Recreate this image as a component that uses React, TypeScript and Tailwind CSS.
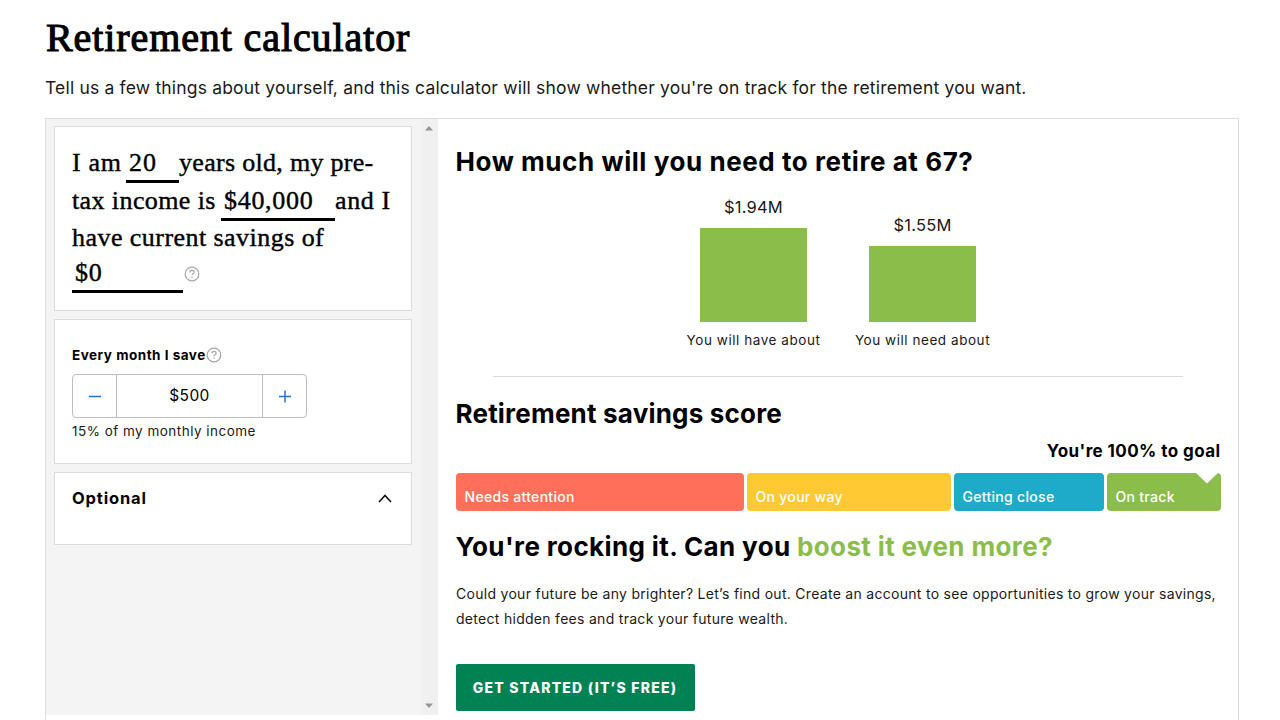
import { useState } from 'react';

const bars = [
  { label: 'You will have about', amount: '$1.94M', height: 94 },
  { label: 'You will need about', amount: '$1.55M', height: 76 },
];

function HelpIcon({ className }: { className?: string }) {
  return (
    <svg className={className} width="16" height="16" viewBox="0 0 16 16" fill="none" stroke="#a6a6a6">
      <circle cx="8" cy="8" r="6.8" strokeWidth="1.2" />
      <path d="M5.9 6.4c0-1.3.9-2.1 2.1-2.1s2.1.8 2.1 1.9c0 1.5-2.1 1.5-2.1 3.1" strokeWidth="1.2" />
      <path d="M8 10.5v1.3" strokeWidth="1.3" />
    </svg>
  );
}

export default function App() {
  const [monthly, setMonthly] = useState(500);
  const [optionalOpen, setOptionalOpen] = useState(true);

  return (
    <div className="h-screen overflow-hidden bg-white pl-[45px] text-black font-[Inter,'Liberation_Sans',sans-serif]">
      <h1 className="pt-[14px] pl-px h-[74px] font-['Liberation_Serif',serif] text-[40px] leading-[48px] tracking-[0.9px] [-webkit-text-stroke:1.1px_#000] whitespace-nowrap">
        Retirement calculator
      </h1>
      <p className="h-[43px] text-[17.5px] leading-[28px] tracking-[0.18px] text-[#1a1a1a] whitespace-nowrap">
        Tell us a few things about yourself, and this calculator will show whether you're on track for the retirement you want.
      </p>

      <div className="flex items-start w-[1194px] h-[640px] mt-px border border-[#dedede]">
        {/* Inputs */}
        <div className="flex w-[392px] h-[596px] bg-[#f4f4f4]">
          <div className="flex flex-col gap-2 pl-2 pt-[7px] w-[375px]">
            <section className="w-[358px] h-[185px] bg-white border border-[#dcdcdc] pl-[17px] font-['Liberation_Serif',serif] text-[26px] [-webkit-text-stroke:0.4px_#000] whitespace-nowrap">
              <div className="flex items-start h-[38px] mt-4 leading-[40px]">
                <span className="w-[54px] tracking-[0.7px]">I am</span>
                <span className="w-[53px] h-[40px] pl-[3px] border-b-[3px] border-black tracking-[1px]">20</span>
                <span className="tracking-[0.3px]">years old, my pre-</span>
              </div>
              <div className="flex items-start h-[38px] leading-[40px]">
                <span className="w-[149px] tracking-[0.4px]">tax income is</span>
                <span className="w-[114px] h-[40px] pl-[3px] border-b-[3px] border-black tracking-[0.7px]">$40,000</span>
                <span className="tracking-[0.6px]">and I</span>
              </div>
              <div className="h-[35px] leading-[38px] tracking-[0.45px]">have current savings of</div>
              <div className="flex items-start leading-[38px]">
                <span className="w-[111px] h-[39px] pl-[3px] border-b-[3px] border-black tracking-[0.7px]">$0</span>
                <HelpIcon className="mt-[12px] ml-px" />
              </div>
            </section>

            <section className="w-[358px] h-[145px] bg-white border border-[#dcdcdc] pl-[17px] pt-[25px]">
              <div className="flex items-center h-5">
                <span className="text-[13.5px] font-bold tracking-[0.5px] whitespace-nowrap">Every month I save</span>
                <HelpIcon />
              </div>
              <div className="flex mt-[9px] w-[235px] h-[44px] border border-[#bdbdbd] rounded-[4px] text-[15.5px] tracking-[0.4px]">
                <button className="flex items-center justify-center w-[44px] border-r border-[#bdbdbd]" onClick={() => setMonthly(monthly - 50)}>
                  <svg width="14" height="14" viewBox="0 0 14 14" stroke="#2a72c3" strokeWidth="1.5"><path d="M1 7.5h12" /></svg>
                </button>
                <span className="flex-1 text-center leading-[42px]">${monthly}</span>
                <button className="flex items-center justify-center w-[44px] border-l border-[#bdbdbd]" onClick={() => setMonthly(monthly + 50)}>
                  <svg width="14" height="14" viewBox="0 0 14 14" stroke="#2a72c3" strokeWidth="1.5"><path d="M1 7.5h12M7 1.5v12" /></svg>
                </button>
              </div>
              <p className="mt-[3px] text-[13.5px] leading-5 tracking-[0.48px] text-[#1a1a1a] whitespace-nowrap">15% of my monthly income</p>
            </section>

            <section className="w-[358px] h-[73px] bg-white border border-[#dcdcdc] pl-[17px] pr-[18px] pt-3">
              <button className="flex items-center justify-between w-full h-[26px]" onClick={() => setOptionalOpen(!optionalOpen)}>
                <span className="text-[16.5px] font-bold tracking-[0.85px]">Optional</span>
                <svg className={optionalOpen ? '' : 'rotate-180'} width="16" height="16" viewBox="0 0 16 16" fill="none" stroke="#111" strokeWidth="1.6">
                  <path d="M2 12l6-6.5 6 6.5" />
                </svg>
              </button>
            </section>
          </div>
          <div className="flex flex-col items-center justify-between w-[17px] py-[6px] pr-px bg-[#f0f0f0]">
            <svg width="8" height="6" viewBox="0 0 8 6" fill="#959595"><path d="M0 5.5L4 1l4 4.5z" /></svg>
            <svg width="8" height="6" viewBox="0 0 8 6" fill="#959595"><path d="M0 .5L4 5l4-4.500z" /></svg>
          </div>
        </div>

        {/* Results */}
        <div className="flex-1 pl-[17.5px] pr-[17.5px] whitespace-nowrap">
          <h2 className="mt-[25px] text-[26px] leading-9 font-bold tracking-[0.57px]">How much will you need to retire at 67?</h2>
          <div className="flex items-end justify-center gap-[34px] h-[170px]">
            {bars.map((bar) => (
              <div key={bar.label} className="flex flex-col items-center w-[135px] text-[#1a1a1a]">
                <span className="text-[16.5px] leading-6 mb-[9px] tracking-[0.2px]">{bar.amount}</span>
                <div className="w-[107px] bg-[#8bbd4b]" style={{ height: bar.height }} />
                <span className="mt-2 text-[13.5px] leading-5 tracking-[0.55px]">{bar.label}</span>
              </div>
            ))}
          </div>
          <hr className="mt-[26px] mx-auto w-[690px] border-[#dadada]" />

          <h2 className="mt-[19px] text-[26px] leading-9 font-bold tracking-[0.2px]">Retirement savings score</h2>
          <p className="mt-[7px] text-right text-[17px] leading-6 font-bold tracking-[0.42px]">You're 100% to goal</p>
          <div className="flex gap-[3px] mt-[9.5px] h-[38px] text-[14px] leading-5 font-medium tracking-[0.3px] text-white">
            <div className="w-[288px] pl-[9px] pt-[14px] bg-[#ff6f59] rounded-[4px]">Needs attention</div>
            <div className="w-[204px] pl-[9px] pt-[14px] bg-[#ffc933] rounded-[4px]">On your way</div>
            <div className="w-[150px] pl-[9px] pt-[14px] bg-[#1eabca] rounded-[4px]">Getting close</div>
            <div className="relative w-[114px] pl-[9px] pt-[14px] bg-[#8bbd4b] rounded-[4px]">
              On track
              <svg className="absolute -top-px right-[3px]" width="22" height="12" viewBox="0 0 22 12" fill="#fff"><path d="M0 0h22v1L11 11.500L0 1z" /></svg>
            </div>
          </div>

          <h2 className="mt-[18.5px] text-[26px] leading-9 font-bold tracking-[0.37px]">
            You're rocking it. Can you <span className="text-[#8bbd4b]">boost it even more?</span>
          </h2>
          <p className="pl-[0.5px] mt-[16px] text-[14px] leading-[25px] tracking-[0.29px] text-[#1a1a1a]">
            Could your future be any brighter? Let’s find out. Create an account to see opportunities to grow your savings,
            <br />
            detect hidden fees and track your future wealth.
          </p>
          <button className="mt-[32.5px] w-[239px] h-[47px] bg-[#008254] rounded-[2px] text-[14px] font-extrabold tracking-[1.23px] text-white">
            GET STARTED (IT’S FREE)
          </button>
        </div>
      </div>
    </div>
  );
}
